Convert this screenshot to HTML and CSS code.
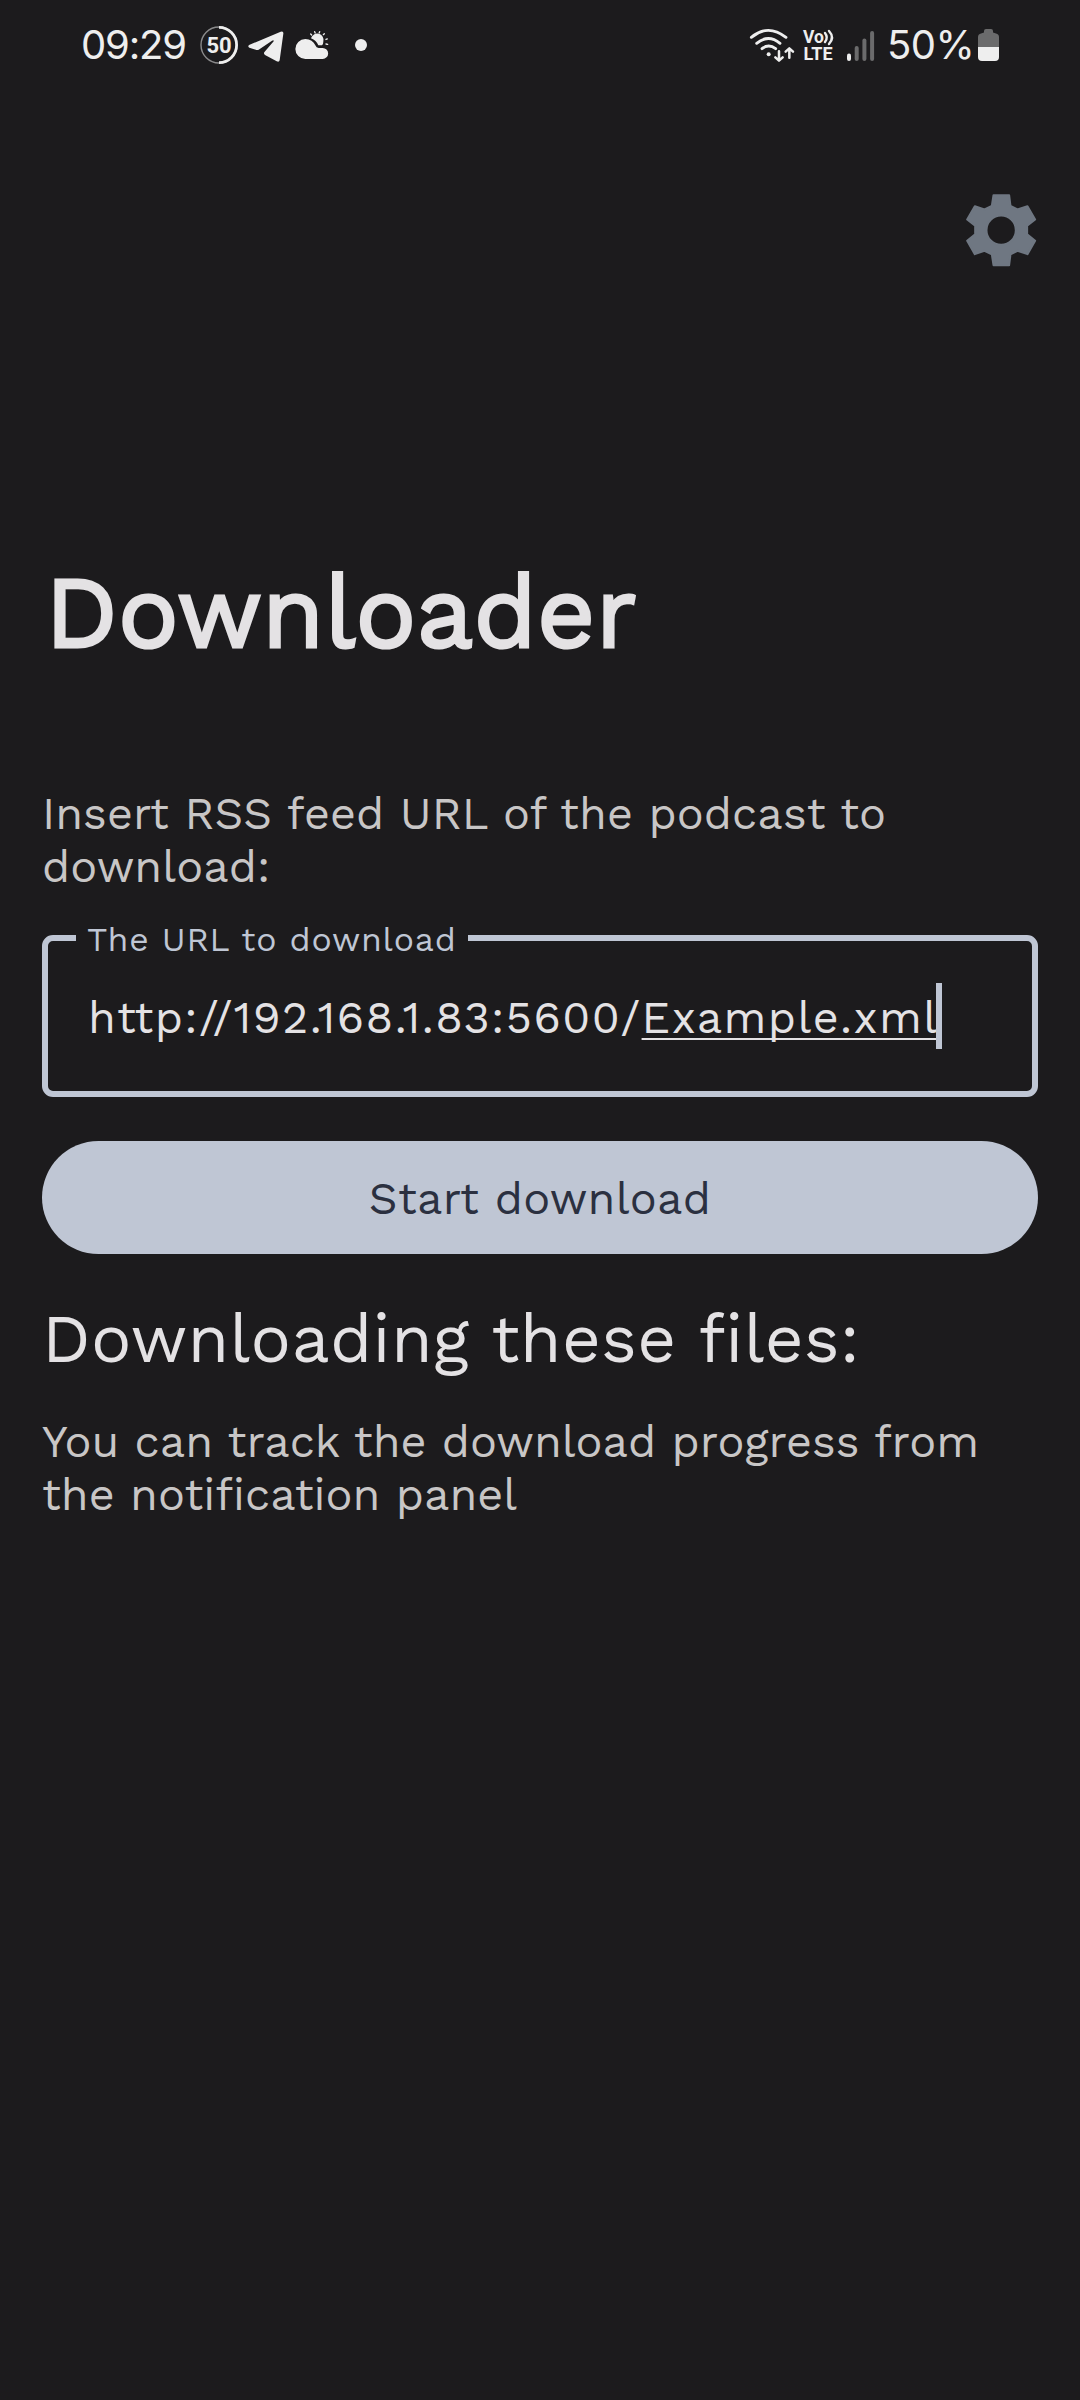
FILE: index.html
```html
<!DOCTYPE html>
<html lang="en">
<head>
<meta charset="utf-8">
<title>Downloader</title>
<link rel="stylesheet" href="styles.css">
</head>
<body>
<header class="status">
  <div class="status-group">
    <span class="clock">09:29</span>
    <svg class="badge" viewBox="0 0 38 38" width="38" height="38">
      <circle cx="19" cy="19" r="18" fill="none" stroke="#8a8a8b" stroke-width="1.4"/>
      <path d="M19 1.4A17.6 17.6 0 0 1 19 36.6" fill="none" stroke="#eee" stroke-width="2.8"/>
      <text x="19" y="27" class="badge-text">50</text>
    </svg>
    <svg class="telegram" viewBox="563 63 107 94" width="35.7" height="31.3" fill="#eee">
      <path d="M566 105L661 65Q670 62 669 71L658 151Q656 158 649 154L614 135Q608 131 613 125L640 94Q641 89 635 92L595 119Q591 121 586 119L567 113Q561 110 566 105Z"/>
    </svg>
    <svg class="weather" viewBox="707 60 102 88" width="34" height="29.3" fill="#eee">
      <path d="M755 85A19 19 0 1 1 792 95Q792 103 788 106H777Q771 91 755 85Z"/>
      <path d="M738 87Q760 88 768 106Q771 114 778 114H790A16.500 16.500 0 0 1 790 147H738A30 30 0 0 1 738 87Z"/>
      <path d="M754 72l3 3M766 65l1.500 4M781 65l-1.500 4M795 71l-3 3M804 87l-4 1.500M805 103l-5-1" stroke="#eee" stroke-width="4" stroke-linecap="round"/>
    </svg>
    <span class="more-dot"></span>
  </div>
  <div class="status-group">
    <svg viewBox="30 24 135 104" width="45" height="34.7" fill="none" stroke="#eee" stroke-width="8.500" stroke-linecap="round" stroke-linejoin="round">
      <path d="M34 52Q84 10 138 52M50 70Q85 41 120 70M66 86Q86 70 107 86"/>
      <path d="M117 94V121M106 112L117 122L128 112M148 113V86M137 95L148 85L159 95" stroke-width="7.500"/>
      <circle cx="86" cy="103" r="6" fill="#eee" stroke="none"/>
    </svg>
    <svg class="volte" viewBox="0 0 32 34" width="32" height="34">
      <text x="0" y="15" class="volte-text">Vo</text>
      <text x="0.500" y="32" class="volte-text lte">LTE</text>
      <path d="M22 5Q25.500 9.500 22 14M26 3Q32 9.500 26 16" fill="none" stroke="#eee" stroke-width="2.400" stroke-linecap="round"/>
    </svg>
    <svg class="signal" viewBox="0 0 28 30" width="28" height="30" fill="#6b6b6c">
      <rect x="0" y="22.500" width="4" height="7.500" rx="2" fill="#eee"/>
      <rect x="7.700" y="15" width="4" height="15" rx="2"/>
      <rect x="15.400" y="7.500" width="4" height="22.500" rx="2"/>
      <rect x="23.100" y="0" width="4" height="30" rx="2"/>
    </svg>
    <span class="percent">50%</span>
    <svg class="battery" viewBox="0 0 21 32" width="21" height="32">
      <path d="M0 18V8Q0 5 3 4.500L6 3.500V2Q6 0 8 0H13Q15 0 15 2V3.500L18 4.500Q21 5 21 8V18Z" fill="#6b6b6c"/>
      <path d="M0 18H21V28Q21 32 17 32H4Q0 32 0 28Z" fill="#eee"/>
    </svg>
  </div>
</header>

<main class="screen">
  <div class="toolbar">
    <svg viewBox="77.500 71.500 211 217" width="70.300" height="72.300">
      <path fill="#6f7782" stroke="#6f7782" stroke-width="6" stroke-linejoin="round" fill-rule="evenodd" d="M160 75H207L211 107L232 118L262 108L285 148L261 167V192L285 212L262 252L232 242L211 253L207 285H160L155 253L133 242L104 252L81 212L105 192V167L81 148L104 108L133 118L155 107ZM183 136A44 44 0 1 0 183 224A44 44 0 1 0 183 136Z"/>
    </svg>
  </div>
  <h1 class="title">Downloader</h1>
  <p class="body-text intro">Insert RSS feed URL of the podcast to<br>download:</p>
  <fieldset class="field">
    <legend class="field-label">The URL to download</legend>
    <div class="field-value"><span>http://192.168.1.83:5600/</span><span class="composing">Example.xml</span><span class="caret"></span></div>
  </fieldset>
  <button class="start" type="button">Start download</button>
  <h2 class="subtitle">Downloading these files:</h2>
  <p class="body-text">You can track the download progress from<br>the notification panel</p>
</main>
</body>
</html>
```
FILE: styles.css
```css
* { box-sizing: border-box; }

body {
  margin: 0;
  min-height: 2400px;
  background: #1c1b1d;
  color: #e4e2e4;
  font-family: "Work Sans", Inter, sans-serif;
}

svg { display: block; flex: none; overflow: visible; }

.status {
  display: flex;
  justify-content: space-between;
  height: 90px;
  padding: 0 81px 0 81px;
  color: #eee;
  font-family: Inter, sans-serif;
}

.status-group { display: flex; align-items: center; }

.clock, .percent { font-size: 40px; line-height: 89px; height: 90px; white-space: nowrap; }
.clock { width: 119px; letter-spacing: -1.200px; }
.percent { margin-left: 12px; width: 91px; letter-spacing: -0.500px; }

.badge-text { font: 700 22px Roboto, sans-serif; text-anchor: middle; fill: #eee; }
.telegram { margin: 3px 0 0 9.500px; }
.weather { margin-left: 12px; }
.more-dot { width: 12px; height: 12px; margin-left: 26px; border-radius: 50%; background: #eee; }

.volte { margin-left: 8px; }
.volte-text { font: 700 17.500px Roboto, sans-serif; fill: #eee; }
.lte { font-size: 18px; }
.signal { margin: 2px 0 0 12px; }

.screen { display: flex; flex-direction: column; padding: 0 42px; }

.toolbar { display: flex; justify-content: flex-end; height: 361px; margin: 104px 2px 0 0; }

.title {
  margin: 0 0 116px 3px;
  font-size: 101.250px;
  font-weight: 400;
  line-height: 116px;
  -webkit-text-stroke: 3px #e4e2e4;
}

.body-text { margin: 0; font-size: 45px; line-height: 53px; color: #c8c6c6; white-space: nowrap; }
.intro { letter-spacing: 0.080px; }

.field {
  height: 180px;
  min-width: 0;
  margin: 24px 0 0;
  padding: 26px 28px 0;
  border: 6px solid #bfc6d4;
  border-radius: 11px;
}

.field-label {
  width: 392px;
  padding: 4px 0 0 11px;
  font-size: 33.750px;
  line-height: 38px;
  letter-spacing: 0.780px;
  color: #bfc6d4;
  white-space: nowrap;
}

.field-value {
  display: flex;
  align-items: flex-start;
  padding-left: 12px;
  font-size: 45px;
  line-height: 66px;
  letter-spacing: 1.430px;
  white-space: nowrap;
}

.composing {
  text-decoration: underline 2px;
  text-underline-offset: 5px;
  text-decoration-skip-ink: none;
}

.caret { width: 6px; height: 66px; margin: -2px 0 0 -2px; background: #bfc6d4; }

.start {
  height: 113px;
  margin: 44px 0 0;
  padding: 2px 0 0 0;
  border: 0;
  border-radius: 57px;
  background: #bfc6d4;
  color: #2b3040;
  font: 400 45px "Work Sans", Inter, sans-serif;
  letter-spacing: 0.250px;
}

.subtitle {
  margin: 45px 0 36px;
  font-size: 67.500px;
  font-weight: 400;
  line-height: 80px;
  letter-spacing: 0.330px;
}
```
